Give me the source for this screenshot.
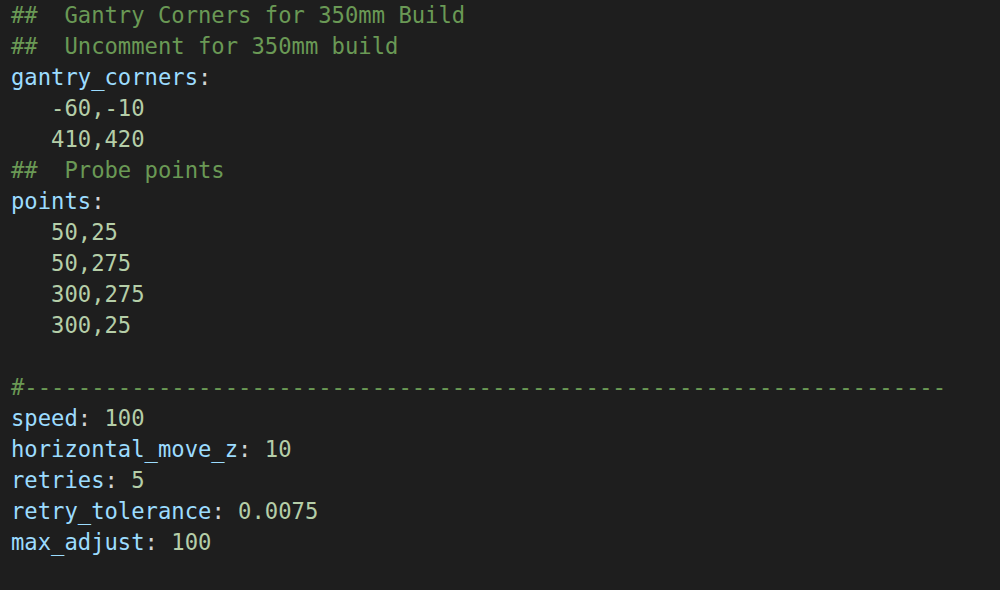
import React from 'react';

const C = ({ children }) => <span className="text-[#6a9955]">{children}</span>;
const K = ({ children }) => <span className="text-[#9cdcfe]">{children}</span>;
const N = ({ children }) => <span className="text-[#b5cea8]">{children}</span>;
const P = ({ children }) => <span className="text-[#d4d4d4]">{children}</span>;

const lines = [
  <C>##  Gantry Corners for 350mm Build</C>,
  <C>##  Uncomment for 350mm build</C>,
  <><K>gantry_corners</K><P>:</P></>,
  <N>   -60,-10</N>,
  <N>   410,420</N>,
  <C>##  Probe points</C>,
  <><K>points</K><P>:</P></>,
  <N>   50,25</N>,
  <N>   50,275</N>,
  <N>   300,275</N>,
  <N>   300,25</N>,
  <> </>,
  <C>{'#' + '-'.repeat(69)}</C>,
  <><K>speed</K><P>: </P><N>100</N></>,
  <><K>horizontal_move_z</K><P>: </P><N>10</N></>,
  <><K>retries</K><P>: </P><N>5</N></>,
  <><K>retry_tolerance</K><P>: </P><N>0.0075</N></>,
  <><K>max_adjust</K><P>: </P><N>100</N></>,
];

export default function App() {
  return (
    <div className="w-[1000px] h-[590px] bg-[#1e1e1e] overflow-hidden pl-[11px] font-['DejaVu_Sans_Mono',monospace] text-[22.2px] leading-[31px]">
      {lines.map((line, i) => (
        <div key={i} className="whitespace-pre h-[31px]">
          {line}
        </div>
      ))}
    </div>
  );
}
